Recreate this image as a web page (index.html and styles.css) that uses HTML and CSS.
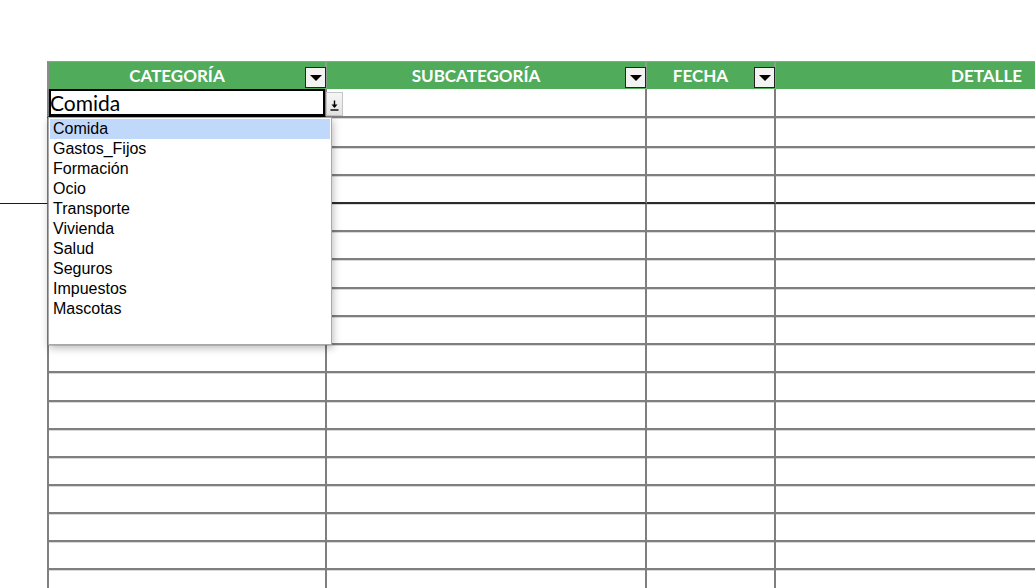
FILE: index.html
```html
<!DOCTYPE html>
<html lang="es">
<head>
    <meta charset="UTF-8">
    <title>Gastos - Hoja</title>
    <link rel="stylesheet" href="styles.css">
</head>
<body>

    <!-- Spreadsheet -->
    <div class="sheet">

        <!-- Header row -->
        <div class="row header-row">
            <div class="gutter"></div>
            <div class="cell col-cat"><span class="label">CATEGORÍA</span><span class="filter"></span></div>
            <div class="cell col-sub"><span class="label">SUBCATEGORÍA</span><span class="filter"></span></div>
            <div class="cell col-date"><span class="label">FECHA</span><span class="filter"></span></div>
            <div class="cell col-detail"><span class="label label-right">DETALLE</span></div>
        </div>

        <!-- Active row with validation list -->
        <div class="row h29">
            <div class="gutter"></div>
            <div class="cell col-cat active">
                <span class="value">Comida</span>
                <span class="list-button">
                    <svg width="9" height="11" viewBox="0 0 9 11">
                        <path d="M4.5 0.5 V6.5" stroke="#000" stroke-width="1.4"/>
                        <path d="M1.5 4.5 L4.5 8 L7.5 4.5 Z" fill="#000"/>
                        <path d="M0.5 10 H8.5" stroke="#000" stroke-width="1.4"/>
                    </svg>
                </span>
                <ul class="dropdown">
                    <li class="selected">Comida</li>
                    <li>Gastos_Fijos</li>
                    <li>Formación</li>
                    <li>Ocio</li>
                    <li>Transporte</li>
                    <li>Vivienda</li>
                    <li>Salud</li>
                    <li>Seguros</li>
                    <li>Impuestos</li>
                    <li>Mascotas</li>
                </ul>
            </div>
            <div class="cell col-sub"></div>
            <div class="cell col-date"></div>
            <div class="cell col-detail"></div>
        </div>

        <div class="row h30"><div class="gutter"></div><div class="cell col-cat"></div><div class="cell col-sub"></div><div class="cell col-date"></div><div class="cell col-detail"></div></div>
        <div class="row"><div class="gutter"></div><div class="cell col-cat"></div><div class="cell col-sub"></div><div class="cell col-date"></div><div class="cell col-detail"></div></div>
        <!-- Frozen rows end here -->
        <div class="row freeze"><div class="gutter"></div><div class="cell col-cat"></div><div class="cell col-sub"></div><div class="cell col-date"></div><div class="cell col-detail"></div></div>
        <div class="row"><div class="gutter"></div><div class="cell col-cat"></div><div class="cell col-sub"></div><div class="cell col-date"></div><div class="cell col-detail"></div></div>
        <div class="row"><div class="gutter"></div><div class="cell col-cat"></div><div class="cell col-sub"></div><div class="cell col-date"></div><div class="cell col-detail"></div></div>
        <div class="row h29"><div class="gutter"></div><div class="cell col-cat"></div><div class="cell col-sub"></div><div class="cell col-date"></div><div class="cell col-detail"></div></div>
        <div class="row"><div class="gutter"></div><div class="cell col-cat"></div><div class="cell col-sub"></div><div class="cell col-date"></div><div class="cell col-detail"></div></div>
        <div class="row"><div class="gutter"></div><div class="cell col-cat"></div><div class="cell col-sub"></div><div class="cell col-date"></div><div class="cell col-detail"></div></div>
        <div class="row"><div class="gutter"></div><div class="cell col-cat"></div><div class="cell col-sub"></div><div class="cell col-date"></div><div class="cell col-detail"></div></div>
        <div class="row h29"><div class="gutter"></div><div class="cell col-cat"></div><div class="cell col-sub"></div><div class="cell col-date"></div><div class="cell col-detail"></div></div>
        <div class="row"><div class="gutter"></div><div class="cell col-cat"></div><div class="cell col-sub"></div><div class="cell col-date"></div><div class="cell col-detail"></div></div>
        <div class="row"><div class="gutter"></div><div class="cell col-cat"></div><div class="cell col-sub"></div><div class="cell col-date"></div><div class="cell col-detail"></div></div>
        <div class="row"><div class="gutter"></div><div class="cell col-cat"></div><div class="cell col-sub"></div><div class="cell col-date"></div><div class="cell col-detail"></div></div>
        <div class="row"><div class="gutter"></div><div class="cell col-cat"></div><div class="cell col-sub"></div><div class="cell col-date"></div><div class="cell col-detail"></div></div>
        <div class="row"><div class="gutter"></div><div class="cell col-cat"></div><div class="cell col-sub"></div><div class="cell col-date"></div><div class="cell col-detail"></div></div>
        <div class="row"><div class="gutter"></div><div class="cell col-cat"></div><div class="cell col-sub"></div><div class="cell col-date"></div><div class="cell col-detail"></div></div>
        <div class="row"><div class="gutter"></div><div class="cell col-cat"></div><div class="cell col-sub"></div><div class="cell col-date"></div><div class="cell col-detail"></div></div>

    </div>

</body>
</html>
```

FILE: styles.css
```css
/* Base */
* {
    box-sizing: border-box;
}

html, body {
    margin: 0;
    padding: 0;
    background-color: #ffffff;
    overflow: hidden;
    height: 588px;
}

body {
    font-family: "Lato", "Liberation Sans", sans-serif;
    color: #000;
}

/* Sheet grid */
.sheet {
    padding-top: 61px;
    width: 1035px;
}

.row {
    display: flex;
    height: 28px;
}

.row.h29 {
    height: 29px;
}

.row.h30 {
    height: 30px;
}

.gutter {
    width: 47px;
    flex-shrink: 0;
}

.cell {
    flex-shrink: 0;
    border-right: 2px solid #7f7f7f;
    border-bottom: 2px solid #7f7f7f;
    box-shadow: 0 1px 0 #d9d9d9;
}

.col-cat {
    width: 280px;
    border-left: 2px solid #7f7f7f;
}

.col-sub {
    width: 320px;
}

.col-date {
    width: 129px;
}

.col-detail {
    flex: 1;
    border-right: none;
}

/* Row under the frozen panes */
.freeze .cell {
    border-bottom-color: #2b2b2b;
}

.freeze .gutter {
    border-bottom: 1px solid #1a1a1a;
}

/* Header */
.header-row {
    height: 28px;
}

.header-row .cell {
    display: flex;
    align-items: flex-end;
    padding-bottom: 1px;
    background-color: #50ab5b;
    border-top: 1px solid #9a9a9a;
    border-bottom: none;
    border-right-color: #8a9f8c;
    box-shadow: none;
}

.header-row .col-cat {
    border-left-color: #8c8c8c;
}

.label {
    flex: 1;
    align-self: center;
    text-align: center;
    color: #ffffff;
    font-weight: bold;
    font-size: 17px;
    line-height: 26px;
    padding-top: 2px;
}

.label-right {
    text-align: right;
    padding-right: 13px;
}

.filter {
    position: relative;
    width: 21px;
    height: 21px;
    margin-right: -1px;
    background-color: #f3f3f3;
    border: 1px solid #222;
}

.filter::after {
    content: "";
    position: absolute;
    left: 4px;
    top: 7px;
    border-left: 6px solid transparent;
    border-right: 6px solid transparent;
    border-top: 6px solid #000;
}

/* Active cell */
.active {
    position: relative;
    box-shadow: inset 0 0 0 2px #000;
    border-bottom-color: #000;
}

.value {
    display: block;
    font-size: 21px;
    line-height: 27px;
    padding-left: 1px;
}

.list-button {
    position: absolute;
    left: 100%;
    top: 3px;
    width: 17px;
    height: 24px;
    margin-left: 1px;
    display: flex;
    align-items: center;
    justify-content: center;
    padding-top: 3px;
    background: linear-gradient(#f6f6f6, #e2e2e2);
    border: 1px solid #c4c4c4;
}

/* Validation list */
.dropdown {
    position: absolute;
    left: -1px;
    top: 100%;
    width: 284px;
    height: 228px;
    margin: 1px 0 0 0;
    padding: 1px 1px 0 1px;
    list-style: none;
    background-color: #ffffff;
    border: 1px solid #a8a8a8;
    box-shadow: 1px 3px 8px rgba(0, 0, 0, 0.28);
    font-family: "Liberation Sans", Arial, sans-serif;
    font-size: 16px;
    z-index: 5;
}

.dropdown li {
    height: 20px;
    line-height: 20px;
    padding-left: 3px;
}

.dropdown li.selected {
    background-color: #c0d9fa;
}
```
